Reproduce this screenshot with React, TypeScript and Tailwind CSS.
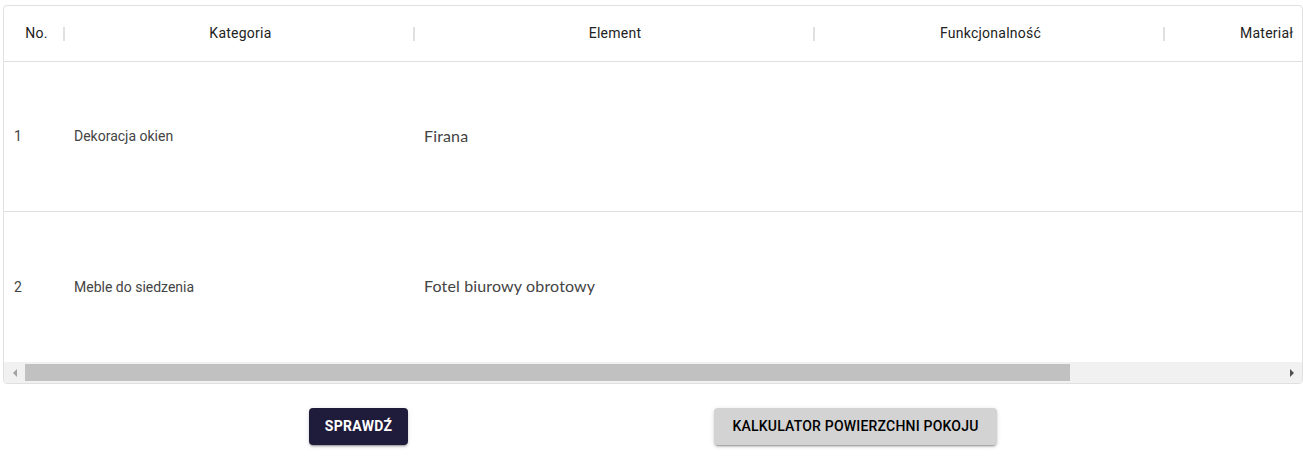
import React from "react";

const rows = [
  { no: "1", kat: "Dekoracja okien", el: "Firana" },
  { no: "2", kat: "Meble do siedzenia", el: "Fotel biurowy obrotowy" },
];

function Sep() {
  return <div className="w-[2px] h-[14px] bg-[#e0e0e0] shrink-0" />;
}

export default function App() {
  return (
    <div className="w-[1303px] h-[476px] bg-white font-['Roboto',sans-serif] text-[rgba(0,0,0,0.87)]">
      <div className="pt-[5px] pl-[3px]">
        <div className="w-[1300px] border border-[#e0e0e0] rounded-[4px] overflow-hidden">
          <div className="overflow-hidden">
            <div className="w-[1600px]">
              {/* header */}
              <div className="flex items-center h-[56px] border-b border-[#e0e0e0] text-[14px] font-normal tracking-[0.25px] text-[#222]">
                <div className="w-[59px] flex items-center justify-center shrink-0 pl-[6px]">
                  <span className="flex-1 text-center">No.</span>
                </div>
                <Sep />
                <div className="w-[348px] text-center shrink-0 pl-[3px]">Kategoria</div>
                <Sep />
                <div className="w-[398px] text-center shrink-0 pl-[2px]">Element</div>
                <Sep />
                <div className="w-[348px] text-center shrink-0 pl-[3px]">Funkcjonalność</div>
                <Sep />
                <div className="w-[300px] shrink-0 pl-[75px]">Materiał</div>
              </div>
              {rows.map((r, i) => (
                <div
                  key={i}
                  className="flex items-center h-[150px] border-b border-[#e0e0e0] last:border-b-0"
                >
                  <div className="w-[60px] pl-[10px] shrink-0 text-[14px] text-[#444]">{r.no}</div>
                  <div className="w-[350px] pl-[10px] shrink-0 text-[14px] text-[#444]">{r.kat}</div>
                  <div className="w-[400px] pl-[10px] shrink-0 text-[16px] tracking-[0.15px] font-['Lato',sans-serif] text-[#444] -mt-[2px]">
                    {r.el}
                  </div>
                  <div className="w-[350px] shrink-0" />
                </div>
              ))}
            </div>
          </div>
          {/* scrollbar */}
          <div className="h-[21px] bg-[#f1f1f1] flex items-center">
            <div className="w-[21px] h-full flex items-center justify-center">
              <svg width="6" height="8" viewBox="0 0 6 8">
                <path d="M5 0 L1 4 L5 8 Z" fill="#a3a3a3" />
              </svg>
            </div>
            <div className="flex-1 h-full flex items-center">
              <div className="w-[1045px] h-[17px] bg-[#c1c1c1]" />
            </div>
            <div className="w-[21px] h-full flex items-center justify-center">
              <svg width="6" height="8" viewBox="0 0 6 8">
                <path d="M1 0 L5 4 L1 8 Z" fill="#505050" />
              </svg>
            </div>
          </div>
        </div>
      </div>
      <div className="flex mt-[24px] pl-[309px] gap-[306px]">
        <button className="h-[37px] w-[99px] rounded-[4px] bg-[#1f1b3a] text-white text-[14px] font-bold uppercase tracking-[0.3px] shadow-[0_3px_1px_-2px_rgba(0,0,0,0.2),0_2px_2px_0_rgba(0,0,0,0.14),0_1px_5px_0_rgba(0,0,0,0.12)]">
          Sprawdź
        </button>
        <button className="h-[37px] w-[283px] rounded-[4px] bg-[#d3d3d3] text-black text-[14px] font-medium uppercase tracking-[0.2px] shadow-[0_3px_1px_-2px_rgba(0,0,0,0.2),0_2px_2px_0_rgba(0,0,0,0.14),0_1px_5px_0_rgba(0,0,0,0.12)]">
          Kalkulator powierzchni pokoju
        </button>
      </div>
    </div>
  );
}
